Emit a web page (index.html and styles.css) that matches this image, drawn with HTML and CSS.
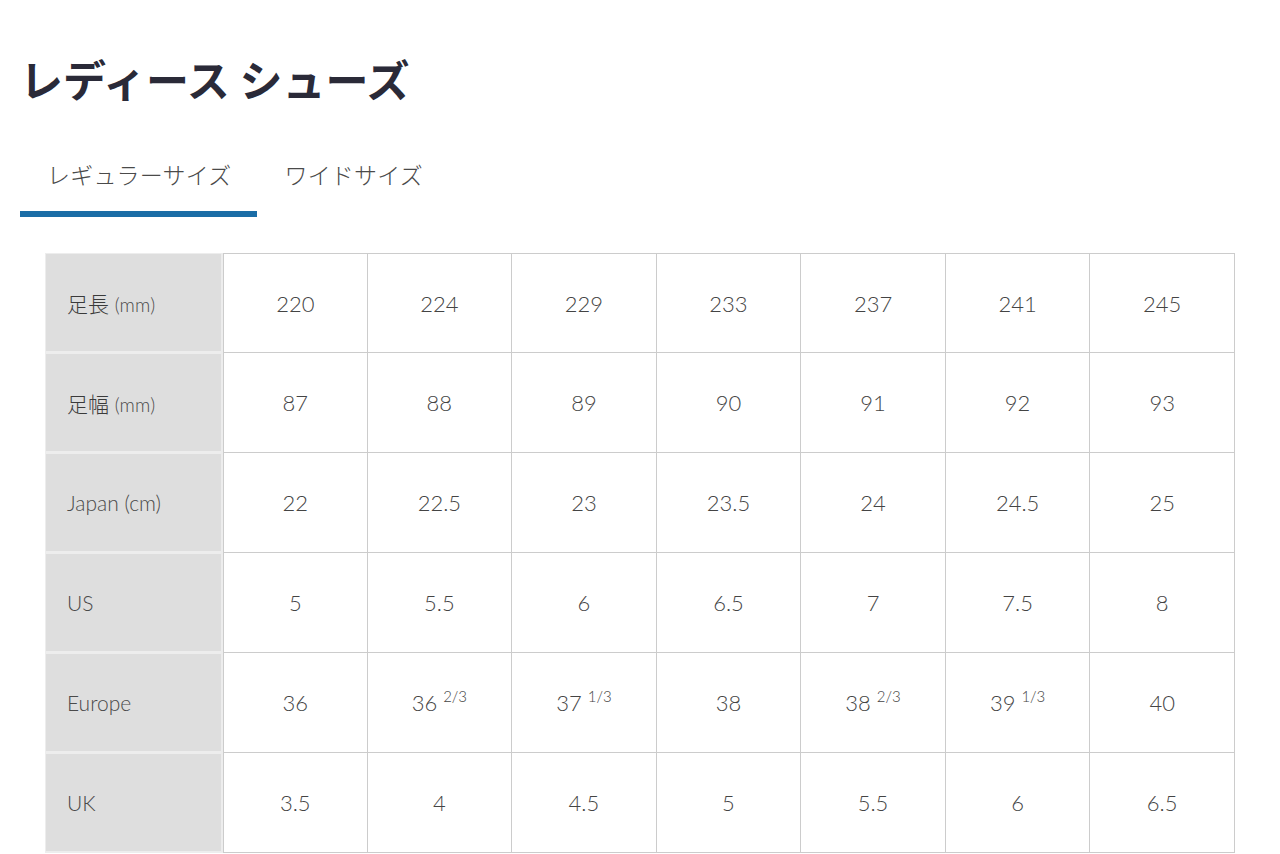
FILE: index.html
```html
<!DOCTYPE html>
<html lang="ja">
<head>
<meta charset="utf-8">
<title>レディース シューズ</title>
<link rel="stylesheet" href="styles.css">
</head>
<body>
<div class="page">
  <h1 class="title">レディース シューズ</h1>
  <div class="tabs">
    <div class="tab tab-active">レギュラーサイズ</div>
    <div class="tab">ワイドサイズ</div>
  </div>
  <table class="size-table">
    <tbody>
      <tr>
        <th><span class="jp">足長</span> <span class="unit">(mm)</span></th>
        <td>220</td><td>224</td><td>229</td><td>233</td><td>237</td><td>241</td><td>245</td>
      </tr>
      <tr>
        <th><span class="jp">足幅</span> <span class="unit">(mm)</span></th>
        <td>87</td><td>88</td><td>89</td><td>90</td><td>91</td><td>92</td><td>93</td>
      </tr>
      <tr>
        <th>Japan (cm)</th>
        <td>22</td><td>22.5</td><td>23</td><td>23.5</td><td>24</td><td>24.5</td><td>25</td>
      </tr>
      <tr>
        <th>US</th>
        <td>5</td><td>5.5</td><td>6</td><td>6.5</td><td>7</td><td>7.5</td><td>8</td>
      </tr>
      <tr>
        <th>Europe</th>
        <td>36</td><td>36 <sup>2/3</sup></td><td>37 <sup>1/3</sup></td><td>38</td><td>38 <sup>2/3</sup></td><td>39 <sup>1/3</sup></td><td>40</td>
      </tr>
      <tr>
        <th>UK</th>
        <td>3.5</td><td>4</td><td>4.5</td><td>5</td><td>5.5</td><td>6</td><td>6.5</td>
      </tr>
    </tbody>
  </table>
</div>
</body>
</html>
```
FILE: styles.css
```css
html, body {
  margin: 0;
  padding: 0;
  background: #ffffff;
}

body {
  font-family: "Lato", "Noto Sans CJK JP", sans-serif;
  color: #444444;
}

.page {
  padding: 0 20px;
}

.title {
  margin: 53px 0 0 0;
  font-family: "Noto Sans CJK JP", sans-serif;
  font-size: 43px;
  line-height: 50px;
  font-weight: 700;
  color: #2a2a38;
  letter-spacing: 0;
}

.tabs {
  display: flex;
  margin-top: 40px;
}

.tab {
  font-family: "Noto Sans CJK JP", sans-serif;
  font-size: 23px;
  line-height: 30px;
  font-weight: 300;
  letter-spacing: 0.2px;
  color: #4a4a4a;
  padding: 16px 26px 22px 27px;
  border-bottom: 6px solid transparent;
}

.tab-active {
  border-bottom-color: #1a6da6;
}

.size-table {
  margin: 36px 25px 0 25px;
  width: calc(100% - 50px);
  border-collapse: separate;
  border-spacing: 0;
  table-layout: fixed;
}

.size-table th {
  width: 178px;
  height: 100px;
  box-sizing: border-box;
  background: #dedede;
  border-top: 1px solid #ededed;
  border-bottom: 2px solid #ededed;
  border-left: 1px solid #ededed;
  border-right: 2px solid #ededed;
  text-align: left;
  padding: 0 0 0 21px;
  font-weight: 300;
  font-size: 21px;
  color: #4a4a4a;
}

.size-table td {
  height: 100px;
  box-sizing: border-box;
  text-align: center;
  padding: 0;
  font-size: 22px;
  font-weight: 300;
  color: #444444;
  border-right: 1px solid #cccccc;
  border-bottom: 1px solid #cccccc;
}

.size-table th + td {
  border-left: 1px solid #cccccc;
}

.size-table tr:first-child td {
  border-top: 1px solid #cccccc;
}

.jp {
  font-family: "Noto Sans CJK JP", sans-serif;
  font-size: 21px;
  font-weight: 300;
  color: #3a3a3a;
}

.unit {
  font-size: 19px;
}

.size-table sup {
  font-size: 15px;
  line-height: 0;
  vertical-align: 9px;
}
```
